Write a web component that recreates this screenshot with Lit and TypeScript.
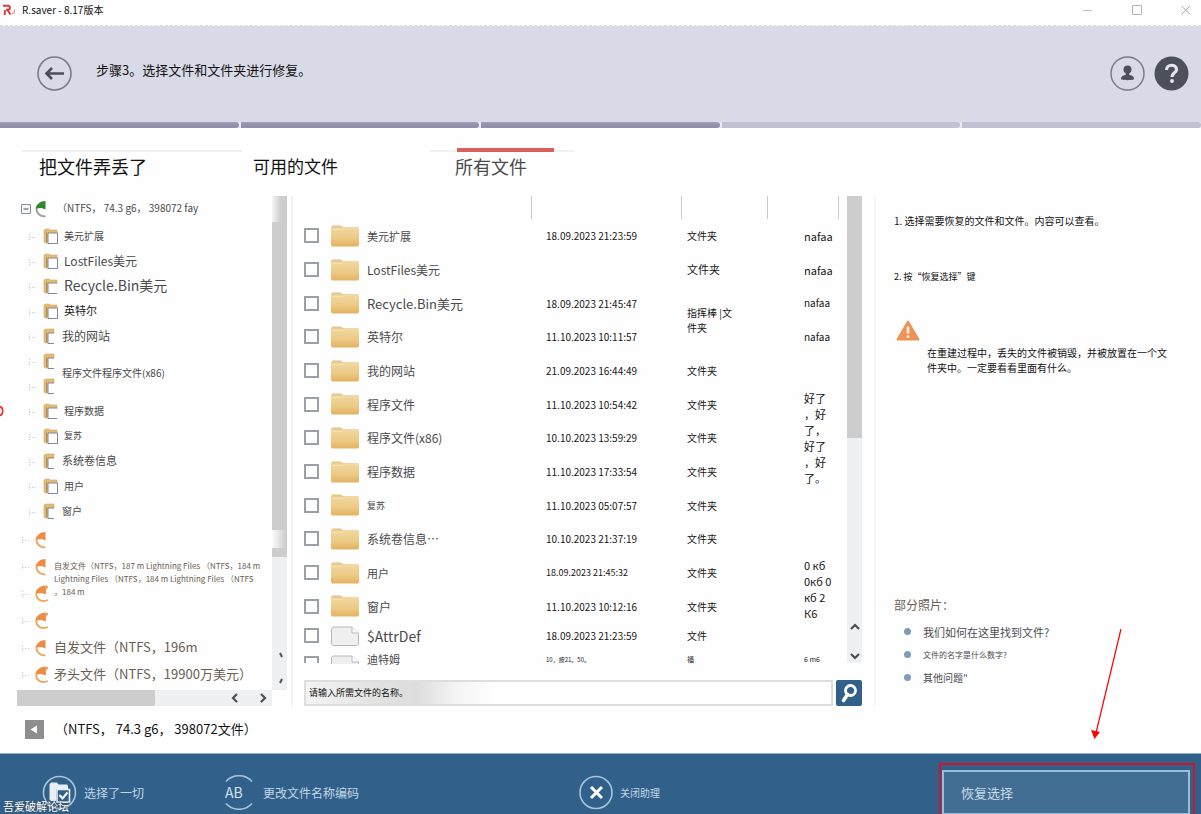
import { LitElement, html, css, svg, nothing } from "lit";
import { customElement, property, state } from "lit/decorators.js";
import { classMap } from "lit/directives/class-map.js";

interface TreeNode {
  lines?: string[];
  size?: string;
  icons: string[];
  narrow?: boolean;
  strong?: boolean;
}

interface FileRow {
  name: string;
  size: string;
  date: string;
  dateSize?: string;
  type?: string[];
  typeSize?: string;
  typeSpan?: number;
  kb?: string[];
  kbSize?: string;
  kbSpan?: number;
  doc?: boolean;
  partial?: boolean;
}

const FOLDERS: TreeNode[] = [
  { lines: ["美元扩展"], size: "s10", icons: ["full"] },
  { lines: ["LostFiles美元"], size: "s12", icons: ["full"] },
  { lines: ["Recycle.Bin美元"], size: "s14", icons: ["cut"] },
  { lines: ["英特尔"], size: "s11", icons: ["full"], strong: true },
  { lines: ["我的网站"], size: "s12", icons: ["slim"], narrow: true },
  { lines: ["程序文件程序文件(x86)"], size: "s10", icons: ["slim", "slim"], narrow: true },
  { lines: ["程序数据"], size: "s10", icons: ["cut"] },
  { lines: ["复苏"], size: "s9", icons: ["full"] },
  { lines: ["系统卷信息"], size: "s11", icons: ["slim"], narrow: true },
  { lines: ["用户"], size: "s10", icons: ["full"] },
  { lines: ["窗户"], size: "s10", icons: ["slim"], narrow: true },
];

const VOLUMES: TreeNode[] = [
  { icons: ["slim"] },
  {
    lines: [
      "自发文件（NTFS，187 m Lightning Files （NTFS，184 m",
      "Lightning Files （NTFS，184 m Lightning Files （NTFS",
      "，184 m",
    ],
    size: "s8",
    icons: ["slim", "full"],
  },
  { icons: ["full"] },
  { lines: ["自发文件（NTFS，196m"], size: "s13", icons: ["slim"] },
  { lines: ["矛头文件（NTFS，19900万美元）"], size: "s13", icons: ["full"] },
];

const FILES: FileRow[] = [
  { name: "美元扩展", size: "s11", date: "18.09.2023 21:23:59", type: ["文件夹"], kb: ["nafaa"] },
  { name: "LostFiles美元", size: "s12", date: "", type: ["文件夹"], typeSize: "s11", kb: ["nafaa"] },
  { name: "Recycle.Bin美元", size: "s13", date: "18.09.2023 21:45:47", type: ["指挥棒 |文", "件夹"], typeSpan: 2, kb: ["nafaa"], kbSize: "s10" },
  { name: "英特尔", size: "s12", date: "11.10.2023 10:11:57", kb: ["nafaa"], kbSize: "s10" },
  { name: "我的网站", size: "s12", date: "21.09.2023 16:44:49", type: ["文件夹"], kb: [] },
  { name: "程序文件", size: "s12", date: "11.10.2023 10:54:42", type: ["文件夹"], kb: ["好了", "，好", "了，", "好了", "，好", "了。"], kbSpan: 3 },
  { name: "程序文件(x86)", size: "s12", date: "10.10.2023 13:59:29", type: ["文件夹"] },
  { name: "程序数据", size: "s12", date: "11.10.2023 17:33:54", type: ["文件夹"] },
  { name: "复苏", size: "s9", date: "11.10.2023 05:07:57", type: ["文件夹"], kb: [] },
  { name: "系统卷信息⋯", size: "s12", date: "10.10.2023 21:37:19", type: ["文件夹"], kb: [] },
  { name: "用户", size: "s11", date: "18.09.2023 21:45:32", dateSize: "s9", type: ["文件夹"], kb: ["0 кб", "0кб 0", "кб 2", "К6"], kbSpan: 2 },
  { name: "窗户", size: "s12", date: "11.10.2023 10:12:16", type: ["文件夹"] },
  { name: "$AttrDef", size: "s14", date: "18.09.2023 21:23:59", type: ["文件"], kb: [], doc: true },
  { name: "迪特姆", size: "s11", date: "10，按21。50。", dateSize: "s6", type: ["福"], typeSize: "s7", kb: ["6 m6"], kbSize: "s7", doc: true, partial: true },
];

const sizes = css`
  .s6 { font-size: 6px; }
  .s7 { font-size: 7px; }
  .s8 { font-size: 8px; }
  .s9 { font-size: 9px; }
  .s10 { font-size: 10px; }
  .s11 { font-size: 11px; }
  .s12 { font-size: 12px; }
  .s13 { font-size: 13px; }
  .s14 { font-size: 14px; }
`;

const reset = css`
  * { box-sizing: border-box; }
  button {
    font: inherit;
    color: inherit;
    background: none;
    border: 0;
    padding: 0;
    margin: 0;
    text-align: left;
    cursor: pointer;
  }
  svg { display: block; flex: none; }
`;

const broken = (lines: string[]) => lines.map((l, i) => html`${i ? html`<br />` : nothing}${l}`);

const chevron = (d: string) => html`
  <svg width="10" height="10" viewBox="0 0 10 10" aria-hidden="true">
    <path d=${d} fill="none" stroke="#4e4e50" stroke-width="2.2" />
  </svg>`;

@customElement("tree-panel")
export class TreePanel extends LitElement {
  static styles = [reset, sizes, css`
    :host { display: flex; flex-direction: column; min-height: 0; padding: 0 4px 0 17px; border-right: 2px solid #f1f1f2; }
    .view { flex: 1; display: flex; min-height: 0; }
    .tree { flex: 1; min-width: 0; overflow: hidden; margin: 0; padding: 0; list-style: none; color: #4a4a4c; white-space: nowrap; }
    .tree ul { margin: 0; padding: 2px 0; list-style: none; }
    .root { display: flex; align-items: center; height: 26px; padding-left: 4px; }
    .root span { padding: 0 0 3px 8px; font-size: 10px; }
    .root svg + svg { margin-left: 4px; }
    .node { display: flex; align-items: center; }
    .label { padding-bottom: 3px; }
    .icons { flex: none; width: 47px; padding-left: 11px; }
    .icons.narrow { width: 45px; }
    .icon { display: flex; align-items: center; gap: 5px; height: 25px; }
    .strong { color: #151515; }
    .volumes .icons { width: 37px; padding-left: 4px; }
    .volumes .icon { height: 27px; gap: 4px; }
    .volumes { color: #6b6054; }
    .volumes .s8 { line-height: 13px; }
    .vbar { flex: none; width: 15px; display: flex; flex-direction: column; background: #eef0f2; }
    .vthumb {
      height: 73%;
      background:
        linear-gradient(90deg, #f4f4f4, #cdcdcd) 0 0 / 9px 26px no-repeat,
        linear-gradient(90deg, #fafafa, #d0d0d0) 0 334px / 13px 18px no-repeat,
        #cdcdcd;
    }
    .vbar svg { margin: auto 3px 0 auto; }
    .hbar { flex: none; display: flex; align-items: center; gap: 10px; height: 16px; margin-right: 15px; background: #eef0f2; }
    .hthumb { width: 54%; height: 100%; margin-right: auto; background: #cdcdcd; }
    .hbar button { width: 18px; display: grid; place-items: center; }
  `];

  private twig() {
    return html`<svg width="10" height="10" viewBox="0 0 10 10" aria-hidden="true">
      <path d="M1.500 2v7M1.500 5.500h7" fill="none" stroke="#c6c6c6" stroke-dasharray="1 1.500" />
    </svg>`;
  }

  private folder(kind: string) {
    const page =
      kind === "full" ? svg`<path d="M5 5h9.500v10.500H5z" fill="#fff" stroke="#84888f"/>`
      : kind === "cut" ? svg`<path d="M14 5H5v10.500h9" fill="#fff" stroke="#84888f"/>`
      : svg`<path d="M11 5H5v10.500h6" fill="#fff" stroke="#84888f"/>`;
    const back = kind === "slim" ? "M1 2l2-1h8v4H5v10H2l-1-1z" : "M1 2l2-1h3l1 1h7v4H5v9H2l-1-1z";
    return html`<svg width="17" height="17" viewBox="0 0 17 17" aria-hidden="true">
      <path d=${back} fill="#e5bb74" stroke="#d0a661" stroke-width=".6" />
      <path d="M3.500 4v10" stroke="#a98f66" stroke-width="1" />${page}
    </svg>`;
  }

  private disk(color: string, ring: string, kind: string) {
    return html`<svg width="14" height="18" viewBox="0 0 14 18" aria-hidden="true">
      <path d=${kind === "full" ? "M13 2C7 .2 1.300 4 1.300 9.300c0 5 5.500 8.500 11.700 5.700M12.500 2c-2.500 1.500-3 4-2 6.500" : "M2 6C0 12 4.500 17 10.500 16.300"}
        fill="none" stroke=${ring} stroke-width="1.900" />
      <path d="M10.500 1C5 1 1.500 4.200 1 8.500l5.500-.5 4 1.500z" fill=${color} />
    </svg>`;
  }

  private node(n: TreeNode, volume: boolean) {
    return html`<li class="node">
      <span class=${classMap({ icons: true, narrow: !!n.narrow })}>
        ${n.icons.map((k) => html`<span class="icon">${this.twig()}${volume ? this.disk("#ee8c45", "#e9a964", k) : this.folder(k)}</span>`)}
      </span>
      ${n.lines ? html`<span class=${classMap({ label: true, [n.size ?? "s10"]: true, strong: !!n.strong })}>${broken(n.lines)}</span>` : nothing}
    </li>`;
  }

  render() {
    return html`
      <div class="view">
        <ul class="tree">
          <li>
            <div class="root">
              <svg width="10" height="10" viewBox="0 0 10 10" aria-hidden="true">
                <path d="M.5.500h9v9h-9z" fill="#f3f5f8" stroke="#8b8f96" /><path d="M2.500 5h5" stroke="#555" />
              </svg>
              ${this.disk("#2d8a2f", "#9aa09a", "slim")}
              <span>（NTFS， 74.3 g6， 398072 fay</span>
            </div>
            <ul>${FOLDERS.map((n) => this.node(n, false))}</ul>
          </li>
          <li class="volumes">${VOLUMES.map((n) => this.node(n, true))}</li>
        </ul>
        <div class="vbar">
          <div class="vthumb"></div>
          <svg width="6" height="40" viewBox="0 0 6 40" aria-hidden="true">
            <path d="M2 3l2 4M4 29l-2 4" stroke="#555" stroke-width="2" />
          </svg>
        </div>
      </div>
      <div class="hbar">
        <div class="hthumb"></div>
        <button aria-label="左">${chevron("M7 1L3 5l4 4")}</button>
        <button aria-label="右">${chevron("M3 1l4 4-4 4")}</button>
      </div>`;
  }
}

@customElement("file-panel")
export class FilePanel extends LitElement {
  static styles = [reset, sizes, css`
    :host { display: flex; flex-direction: column; gap: 14px; min-height: 0; min-width: 0; padding: 0 12px 0 11px; border-right: 2px solid #f5f5f6; }
    .view { flex: 1; display: flex; min-height: 0; }
    .scroll { flex: 1; min-width: 0; overflow: hidden; }
    table { width: 100%; table-layout: fixed; border-collapse: collapse; color: #161616; font-size: 10px; }
    th, td { padding: 0 0 1px; font-weight: normal; text-align: left; white-space: nowrap; }
    .c-check { width: 27px; }
    .c-date { width: 150px; }
    .c-type { width: 86px; }
    .c-kb { width: 71px; }
    .c-end { width: 9px; }
    thead tr { height: 23px; }
    .sep { border-right: 1px solid #c9c9cb; }
    tbody tr { height: 34px; }
    tbody tr:nth-child(3n) { height: 33px; }
    tbody tr:nth-child(n + 13) { height: 26px; }
    tbody tr.partial:last-child { height: 17px; }
    .partial td { padding-top: 4px; padding-bottom: 0; line-height: 13px; }
    .partial input[type="checkbox"] { height: 7px; border-bottom: 0; }
    .name { display: flex; align-items: center; gap: 8px; color: #4a4a4c; }
    .date { padding-left: 15px; }
    .type { padding-left: 6px; line-height: 15px; }
    .kb { padding-left: 37px; font-size: 11px; line-height: 16px; }
    .kb.s10 { font-size: 10px; }
    .kb.s7 { font-size: 7px; }
    input[type="checkbox"] { display: block; appearance: none; width: 15px; height: 15px; margin: 0; border: 2px solid #9aa0a6; background: #fff; }
    input[type="checkbox"]:checked { background: #31618b; }
    .vbar { flex: none; width: 15px; display: flex; flex-direction: column; align-items: center; gap: 19px; margin-bottom: 3px; padding-bottom: 2px; background: #eef0f2; }
    .vthumb { width: 100%; height: 52%; margin-bottom: auto; background: #cdcdcd; }
    .search { display: flex; gap: 3px; height: 26px; }
    .search input {
      flex: 1; min-width: 0; padding: 0 3px 2px; font: inherit; font-size: 9px; color: #111; outline: 0;
      border: 2px solid #dddede; border-radius: 0;
      background: linear-gradient(90deg, #f4f4f4 0, #e4e4e4 60px, #dcdcdc 110px, #f4f4f4 150px, #fff 190px);
    }
    .search input::placeholder { color: #111; opacity: 1; }
    .search button { width: 26px; border-radius: 2px; background: #31618b; display: grid; place-items: center; }
  `];

  private icon(f: FileRow) {
    const h = f.partial ? 9 : 20;
    return f.doc
      ? html`<svg width="28" height=${h} viewBox="0 0 28 ${h}" aria-hidden="true">
          <path d="M2 1h19l6.500 6v11l-1.500 1.500H2L.5 18V2.500z" fill="#efefef" stroke="#b9b9b9" />
          <path d="M21 1v6h6.500" fill="#fff" stroke="#b9b9b9" /></svg>`
      : html`<svg width="28" height="22" viewBox="0 0 28 22" aria-hidden="true">
          <defs><linearGradient id="g" x1="0" y1="0" x2="0" y2="1">
            <stop offset="0" stop-color="#e3c080" /><stop offset=".15" stop-color="#f0d69d" />
            <stop offset=".6" stop-color="#ecca86" /><stop offset="1" stop-color="#e2b260" /></linearGradient></defs>
          <path d="M0 2l1.500-1.500h8L12 2h15l1 1.500V20l-1 1.500H1L0 20z" fill="url(#g)" />
          <path d="M.5 4.500h11l2-1.500H27" fill="none" stroke="#f6e2b4" stroke-width=".8" /></svg>`;
  }

  private row(f: FileRow, i: number) {
    return html`<tr class=${classMap({ partial: !!f.partial })}>
      <td><input type="checkbox" id="f${i}" /></td>
      <td><label class="name" for="f${i}">${this.icon(f)}<span class=${f.size}>${f.name}</span></label></td>
      <td class="date ${f.dateSize ?? ""}">${f.date}</td>
      ${f.type ? html`<td class="type ${f.typeSize ?? ""}" rowspan=${f.typeSpan ?? 1}>${broken(f.type)}</td>` : nothing}
      ${f.kb ? html`<td class="kb ${f.kbSize ?? ""}" rowspan=${f.kbSpan ?? 1}>${broken(f.kb)}</td>` : nothing}
      <td></td>
    </tr>`;
  }

  render() {
    return html`
      <div class="view">
        <div class="scroll">
          <table>
            <thead><tr>
              <th class="c-check"></th><th class="sep"></th><th class="c-date sep"></th>
              <th class="c-type sep"></th><th class="c-kb sep"></th><th class="c-end"></th>
            </tr></thead>
            <tbody>${FILES.map((f, i) => this.row(f, i))}</tbody>
          </table>
        </div>
        <div class="vbar">
          <div class="vthumb"></div>
          <button aria-label="上">${chevron("M1 7l4-4 4 4")}</button>
          <button aria-label="下">${chevron("M1 3l4 4 4-4")}</button>
        </div>
      </div>
      <form class="search" @submit=${(e: Event) => e.preventDefault()}>
        <input type="text" aria-label="请输入所需文件的名称。" placeholder="请输入所需文件的名称。" />
        <button aria-label="搜索">
          <svg width="20" height="20" viewBox="0 0 20 20" aria-hidden="true">
            <circle cx="11.500" cy="7.500" r="5" fill="none" stroke="#fff" stroke-width="2.800" />
            <path d="M8.500 11.500L4.500 17.500" stroke="#fff" stroke-width="3.600" stroke-linecap="round" />
          </svg>
        </button>
      </form>`;
  }
}

@customElement("help-panel")
export class HelpPanel extends LitElement {
  static styles = [reset, sizes, css`
    :host { display: flex; flex-direction: column; padding: 15px 27px 17px 18px; color: #111; line-height: 20px; }
    p { margin: 0; }
    .step { margin-bottom: 36px; font-size: 10px; }
    .second { font-size: 9px; margin-bottom: 33px; }
    .warn { display: flex; gap: 7px; font-size: 10px; line-height: 15px; padding-left: 2px; }
    .warn p { flex: 1; padding-top: 25px; }
    h2 { margin: auto 0 5px; font-size: 12px; font-weight: normal; line-height: 20px; color: #6b5f55; }
    ul { margin: 0; padding: 0 0 0 10px; list-style: none; }
    li { display: flex; align-items: center; gap: 12px; height: 23px; }
    li::before { content: ""; width: 7px; height: 7px; border-radius: 50%; background: #7e9dbb; }
    a { color: #4c4c50; text-decoration: none; }
  `];

  render() {
    return html`
      <p class="step">1. 选择需要恢复的文件和文件。内容可以查看。</p>
      <p class="second">2. 按“恢复选择”键</p>
      <div class="warn">
        <svg width="24" height="21" viewBox="0 0 24 21" aria-hidden="true">
          <path d="M12 1.500L22.500 19.500H1.500z" fill="#ee9358" stroke="#ee9358" stroke-width="2" stroke-linejoin="round" />
          <path d="M12 6.500v7M12 15.500v2.500" stroke="#fff1e6" stroke-width="2.600" />
        </svg>
        <p>在重建过程中，丢失的文件被销毁，并被放置在一个文件夹中。一定要看看里面有什么。</p>
      </div>
      <h2>部分照片：</h2>
      <ul>
        <li><a class="s11" href="#find">我们如何在这里找到文件?</a></li>
        <li><a class="s8" href="#names">文件的名字是什么数字?</a></li>
        <li><a class="s10" href="#other">其他问题"</a></li>
      </ul>`;
  }
}

@customElement("app-root")
export class AppRoot extends LitElement {
  @property({ type: Number }) step = 3;
  @state() private tab = 2;

  static styles = [reset, sizes, css`
    :host {
      position: relative; display: flex; flex-direction: column; height: 100vh; overflow: hidden;
      background: #fefefe; color: #111; font-family: "Noto Sans CJK SC", "Noto Sans", sans-serif; font-size: 12px;
    }
    .title { display: flex; align-items: center; gap: 7px; height: 26px; padding: 0 9px 5px 3px; font-size: 10px; border-bottom: 1px dashed #dedee4; }
    .title h1 { flex: 1; margin: 0; padding-bottom: 2px; font-size: 10px; font-weight: normal; }
    .controls { display: flex; gap: 37px; }
    header { display: flex; align-items: center; height: 96px; padding: 0 12px 2px 37px; background: #d9dae7; }
    header h2 { flex: 1; margin: 0; padding: 0 0 8px 24px; font-size: 13px; font-weight: normal; }
    .round { display: flex; gap: 9px; }
    .steps { display: grid; grid-template-columns: repeat(5, 1fr); gap: 2px; height: 6px; margin: 0; padding: 0; list-style: none; background: #e9e9f0; }
    .steps li { background: #c0c1d2; border-radius: 0 3px 3px 0; }
    .steps .done { background: linear-gradient(#a3a3ae, #9190ae 50%); }
    .tabs { display: flex; align-items: flex-start; height: 68px; padding: 22px 0 0 22px; }
    .tabs button { position: relative; width: 188px; height: 36px; padding: 0 0 6px 11px; border-top: 2px solid transparent; font-size: 17px; line-height: 28px; }
    .tabs .lost { width: 220px; padding-left: 17px; border-color: #eff1f5; font-size: 18px; }
    .tabs .all { width: 144px; padding-left: 25px; border-color: #f1f1f3; font-size: 18px; }
    .tabs .on { color: #4a4a4c; }
    .tabs .on::before { content: ""; position: absolute; top: -4px; left: 27px; right: 20px; height: 4px; background: #d95f5c; }
    main { flex: 1; min-height: 0; display: grid; grid-template-columns: 293px minmax(0, 1fr) 325px; grid-template-rows: minmax(0, 1fr); }
    .status { display: flex; align-items: center; gap: 11px; height: 47px; padding-left: 25px; font-size: 13px; }
    .status span { padding-bottom: 2px; }
    footer {
      display: grid; grid-template-columns: 180fr 357fr 363fr 248fr; height: 61px; padding: 16px 11px 0 42px;
      background: #31618b; border-top: 1px solid #8fb0cb; color: #c3d6e6; overflow: hidden;
    }
    footer button { display: flex; align-items: center; gap: 7px; height: 45px; }
    .restore { padding-left: 17px; border: 2px solid #9cbdd8; background: #426e93; font-size: 13px; color: #c9dbe9; }
    .marker { position: absolute; right: 6px; bottom: -3px; width: 256px; height: 54px; border: 2px solid #d0142c; pointer-events: none; }
    .arrow { position: absolute; right: 74px; bottom: 74px; pointer-events: none; }
    .edge { position: absolute; left: 0; top: 405px; }
    .stamp { position: absolute; left: 3px; bottom: 0; font-size: 11px; line-height: 16px; color: #fff; text-shadow: 0 0 2px #333; }
  `];

  render() {
    return html`
      <div class="title">
        <svg width="12" height="12" viewBox="0 0 12 12" aria-hidden="true">
          <path d="M0 1.800h5c2.500 0 2.500 4 0 4H3M4.500 6l3 4.500M1.800 6v5" fill="none" stroke="#dd3a38" stroke-width="2" />
          <path d="M9 9.500h1.500M11.500 5.500v4" stroke="#e99a94" stroke-width="1.400" />
        </svg>
        <h1>R.saver - 8.17版本</h1>
        <div class="controls">
          <button aria-label="最小化"><svg width="12" height="12" viewBox="0 0 12 12"><path d="M1 6.500h9" stroke="#c4c4c4" /></svg></button>
          <button aria-label="最大化"><svg width="12" height="12" viewBox="0 0 12 12"><path d="M1.500 1.500h9v9h-9z" fill="none" stroke="#b4b4b4" /></svg></button>
          <button aria-label="关闭"><svg width="12" height="12" viewBox="0 0 12 12"><path d="M1.500 2l8.500 8.500M10 2L1.500 10.500" stroke="#adadad" /></svg></button>
        </div>
      </div>
      <header>
        <button aria-label="返回">
          <svg width="35" height="35" viewBox="0 0 35 35">
            <circle cx="17.500" cy="17.500" r="16.500" fill="none" stroke="#7b7c84" stroke-width="1.600" />
            <path d="M27 17.500H10M15 12L9.500 17.500l5.500 5.500" fill="none" stroke="#4c4d56" stroke-width="2.600" />
          </svg>
        </button>
        <h2>步骤3。选择文件和文件夹进行修复。</h2>
        <div class="round">
          <button aria-label="用户">
            <svg width="35" height="35" viewBox="0 0 35 35">
              <circle cx="17.500" cy="17.500" r="16.500" fill="none" stroke="#7b7c84" stroke-width="1.500" />
              <circle cx="17.500" cy="13.500" r="4" fill="#4c505b" />
              <path d="M16 16h3l.5 3c3 .3 4.500 1.500 4.500 4 0 1.500-13 1.500-13 0 0-2.500 1.500-3.700 4.500-4z" fill="#4c505b" />
            </svg>
          </button>
          <button aria-label="帮助">
            <svg width="35" height="35" viewBox="0 0 35 35">
              <circle cx="17.500" cy="17.500" r="17" fill="#4c505b" />
              <path d="M12.500 14c0-6.500 10-6 10-.5 0 3.500-4.500 3.300-4.500 7.500" fill="none" stroke="#e3e4ee" stroke-width="3.200" />
              <circle cx="18" cy="25" r="2" fill="#e3e4ee" />
            </svg>
          </button>
        </div>
      </header>
      <ol class="steps">${[1, 2, 3, 4, 5].map((n) => html`<li class=${classMap({ done: n <= this.step })}></li>`)}</ol>
      <nav class="tabs">
        ${[["lost", "把文件弄丢了"], ["", "可用的文件"], ["all", "所有文件"]].map(
          ([kind, label], i) => html`<button class="${kind} ${this.tab === i ? "on" : ""}" @click=${() => (this.tab = i)}>${label}</button>`
        )}
      </nav>
      <main><tree-panel></tree-panel><file-panel></file-panel><help-panel></help-panel></main>
      <div class="status">
        <button aria-label="折叠">
          <svg width="19" height="19" viewBox="0 0 19 19"><path d="M0 0h19v19H0z" fill="#8e8e8e" /><path d="M12 5.500v8L5.500 9.500z" fill="#fff" /></svg>
        </button>
        <span>（NTFS， 74.3 g6， 398072文件）</span>
      </div>
      <footer>
        <button>
          <svg width="35" height="35" viewBox="0 0 35 35" aria-hidden="true">
            <circle cx="17.500" cy="17.500" r="16" fill="none" stroke="#a9c3d9" stroke-width="1.600" />
            <path d="M7.500 9.500l1.500-2h6l1.500 2H25l1 1.500v3H14v12H9l-1.500-1.500z" fill="#e7eef5" />
            <path d="M15 14.500h12.500V27H15z" fill="#31618b" stroke="#e7eef5" stroke-width="1.600" />
            <path d="M17.500 20l3 3.500 5-6" fill="none" stroke="#fff" stroke-width="2" />
          </svg>
          <span class="s12">选择了一切</span>
        </button>
        <button>
          <svg width="34" height="35" viewBox="0 0 34 35" aria-hidden="true">
            <path d="M4 6.500a17.500 17.500 0 0 1 26 0M4 28.500a17.500 17.500 0 0 0 26 0" fill="none" stroke="#a9c3d9" stroke-width="1.600" />
            <text x="3" y="22.500" font-size="14" fill="#d3e1ec">AB</text>
          </svg>
          <span class="s12">更改文件名称编码</span>
        </button>
        <button>
          <svg width="34" height="35" viewBox="0 0 34 35" aria-hidden="true">
            <circle cx="17" cy="17.500" r="16" fill="none" stroke="#a9c3d9" stroke-width="1.600" />
            <path d="M12 12l11 11M23 12L12 23" stroke="#fff" stroke-width="3" />
          </svg>
          <span class="s10">关闭助理</span>
        </button>
        <button class="restore">恢复选择</button>
      </footer>
      <div class="marker"></div>
      <svg class="arrow" width="36" height="112" viewBox="0 0 36 112" aria-hidden="true">
        <path d="M30 1L5 105" stroke="#f00" stroke-width="1.200" /><path d="M3.500 111L0 102l9 2z" fill="#f00" />
      </svg>
      <svg class="edge" width="4" height="12" viewBox="0 0 4 12" aria-hidden="true">
        <path d="M-1 1.500c5 0 5 9 0 9" fill="none" stroke="#f03030" stroke-width="1.600" />
      </svg>
      <span class="stamp">吾爱破解论坛</span>`;
  }
}
